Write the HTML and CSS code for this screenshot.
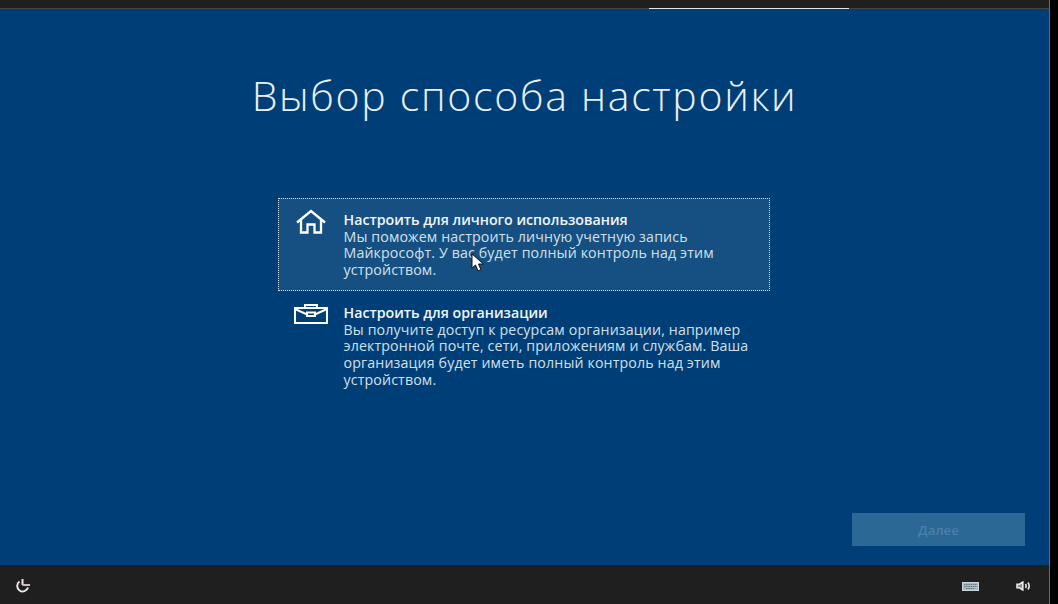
FILE: index.html
```html
<!DOCTYPE html>
<html lang="ru">
<head>
    <meta charset="UTF-8">
    <meta name="viewport" content="width=device-width, initial-scale=1.0">
    <title>Выбор способа настройки</title>
    <link rel="stylesheet" href="styles.css">
</head>
<body>

<div class="screen">
    <div class="top-bar">
        <div class="progress"></div>
    </div>

    <div class="main">
        <h1 class="title">Выбор способа настройки</h1>

        <div class="options">
            <div class="option selected">
                <div class="option-icon">
                    <svg class="home-icon" width="32" height="26" viewBox="0 0 32 26" fill="none" stroke="#fff" stroke-width="2.300">
                        <path d="M2 13.5 16 2l14 11.500"/>
                        <path d="M6 11v12.500h6.500v-8h7v8H26V11"/>
                    </svg>
                </div>
                <div class="option-text">
                    <div class="option-name">Настроить для личного использования</div>
                    <div>Мы поможем настроить личную учетную запись Майкрософт. У вас будет полный контроль над этим устройством.</div>
                </div>
                <svg class="cursor" width="14" height="19" viewBox="0 0 14 19">
                    <path d="M1 1v14l3.500-3 2.500 6 3-1.300-2.500-5.700H12.500z" fill="#fff" stroke="#111" stroke-width="1"/>
                </svg>
            </div>

            <div class="option">
                <div class="option-icon">
                    <svg class="case-icon" width="34" height="20" viewBox="0 0 34 20" fill="none" stroke="#fff" stroke-width="2">
                        <rect x="1" y="4" width="32" height="15"/>
                        <path d="M11 4V1h12v3"/>
                        <path d="M1 5l12 5.500h8L33 5"/>
                        <rect x="13" y="8.500" width="8" height="3.500" fill="#003e78"/>
                    </svg>
                </div>
                <div class="option-text">
                    <div class="option-name">Настроить для организации</div>
                    <div>Вы получите доступ к ресурсам организации, например электронной почте, сети, приложениям и службам. Ваша организация будет иметь полный контроль над этим устройством.</div>
                </div>
            </div>
        </div>

        <div class="actions">
            <button class="next-btn">Далее</button>
        </div>
    </div>

    <div class="bottom-bar">
        <svg class="ease-icon" width="16" height="14" viewBox="0 0 16 14" fill="none" stroke="#e8e8e8" stroke-width="2">
            <path d="M4.500 2.500a5.500 5.500 0 1 0 8.500 6"/>
            <path d="M7.500 0v6"/>
            <path d="M7.500 6H15" stroke="#d9b8b8"/>
        </svg>
        <div class="bottom-right">
            <svg width="17" height="9" viewBox="0 0 17 9">
                <rect x="0.500" y="0.500" width="16" height="8" fill="#a9bcc6" stroke="#c9d6dc"/>
                <path d="M2 2.500h13M2 4.500h13M4 6.500h9" stroke="#66777f" stroke-width="1" stroke-dasharray="1.500 .7"/>
            </svg>
            <svg width="15" height="10" viewBox="0 0 15 10" fill="none" stroke="#e8e8e8" stroke-width="1.600">
                <path d="M1 3.200h2.500L6.800 1v8L3.500 6.800H1z" fill="#8a8a8a"/>
                <path d="M9.500 3c.8 1.300.8 2.700 0 4M12 1.500c1.500 2.300 1.500 4.700 0 7"/>
            </svg>
        </div>
    </div>
</div>

</body>
</html>
```

FILE: styles.css
```css
html, body {
    margin: 0;
    height: 100%;
    background-color: #000;
}
body {
    font-family: "Open Sans", "Liberation Sans", sans-serif;
    overflow: hidden;
}
.screen {
    width: 1049px;
    height: 604px;
    display: flex;
    flex-direction: column;
    border-right: 1px solid #6a6a6a;
}
.top-bar {
    height: 9px;
    background-color: #1f1f1f;
    border-bottom: 1px solid #444;
    box-sizing: border-box;
    padding-left: 649px;
    flex-shrink: 0;
}
.progress {
    width: 200px;
    height: 10px;
    box-sizing: border-box;
    border-bottom: 2px solid #dfe6ea;
}
.main {
    flex: 1;
    background-color: #003e78;
    display: flex;
    flex-direction: column;
    align-items: center;
}
.title {
    margin: 59px 0 0;
    font-size: 41px;
    line-height: 54px;
    font-weight: 300;
    color: #e9f0f5;
    letter-spacing: 1.700px;
}
.options {
    width: 492px;
    margin: 76px 1px 0 0;
}
.option {
    position: relative;
    display: flex;
    box-sizing: border-box;
    height: 93px;
    padding: 14px 16px 0;
    color: #d3e0ea;
    font-size: 14.200px;
    line-height: 16.700px;
    letter-spacing: 0.140px;
}
.option.selected {
    background-color: #165083;
    outline: 1px dotted #d5e0e8;
    outline-offset: -1px;
}
.option-icon {
    flex-shrink: 0;
    width: 34px;
}
.home-icon {
    display: block;
    margin: -3px 0 0 1px;
}
.case-icon {
    display: block;
    margin-top: -1px;
}
.option-text {
    margin-left: 15.500px;
    width: 410px;
}
.option-name {
    color: #f2f6f9;
    font-weight: 600;
    letter-spacing: 0;
}
.cursor {
    position: absolute;
    left: 193px;
    top: 55px;
}
.actions {
    margin-top: auto;
    margin-bottom: 19px;
    align-self: flex-end;
    padding-right: 24px;
}
.next-btn {
    display: block;
    width: 173px;
    height: 33px;
    border: none;
    background-color: #2c6896;
    color: #4b80a8;
    font-family: inherit;
    font-size: 13.300px;
    font-weight: 600;
}
.bottom-bar {
    height: 39px;
    flex-shrink: 0;
    background-color: #1f1f1f;
    display: flex;
    align-items: center;
    justify-content: space-between;
    padding: 0 18px 0 15px;
}
.ease-icon {
    margin-top: 3px;
}
.bottom-right {
    display: flex;
    align-items: center;
    gap: 37px;
    margin-top: 3px;
}
```
